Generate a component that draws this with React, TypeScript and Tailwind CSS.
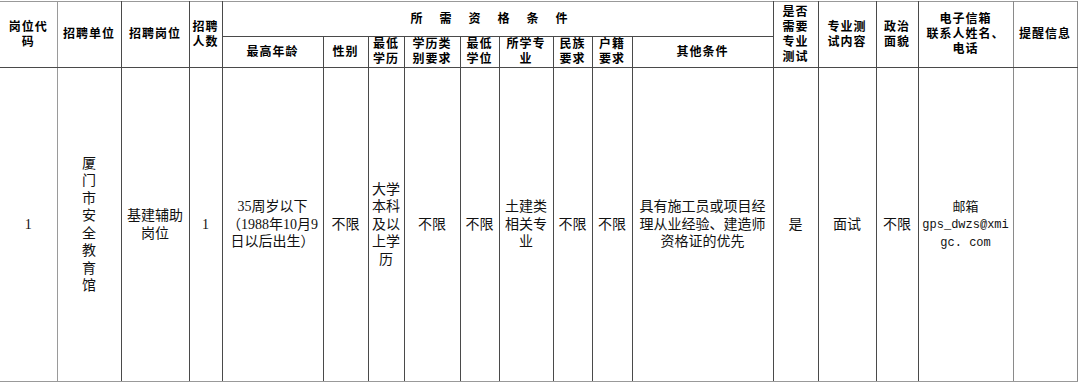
import React from 'react';

const cjk = "font-['Liberation_Serif','Noto_Sans_CJK_SC',serif]";
const th = "border border-[#4a4a4a] p-0 text-center align-middle font-bold text-[12px] leading-[15px] tracking-[1px] text-black";
const td = "border border-[#4a4a4a] p-0 text-center align-middle text-[14px] leading-[17.5px] text-[#111]";

const widths = [57, 64, 68, 33, 101, 45, 36, 56, 39, 54, 39, 40, 141, 45, 58, 42, 95, 64];

const Lines: React.FC<{ lines: string[] }> = ({ lines }) => (
  <>
    {lines.map((l, i) => (
      <div key={i}>{l}</div>
    ))}
  </>
);

export default function App() {
  return (
    <div className={`w-[1080px] h-[384px] bg-white pt-[1px] ${cjk}`}>
      <table className="table-fixed border-collapse w-[1077px]">
        <colgroup>
          {widths.map((w, i) => (
            <col key={i} style={{ width: w }} />
          ))}
        </colgroup>
        <thead>
          <tr className="h-[35px]">
            <th rowSpan={2} className={`${th} border-l-0 border-t-[#999] border-r-[#9a9a9a]`}>
              <Lines lines={['岗位代', '码']} />
            </th>
            <th rowSpan={2} className={`${th} border-t-[#999]`}>招聘单位</th>
            <th rowSpan={2} className={`${th} border-t-[#999]`}>招聘岗位</th>
            <th rowSpan={2} className={`${th} border-t-[#999]`}>
              <Lines lines={['招聘', '人数']} />
            </th>
            <th colSpan={9} className={`${th} border-t-[#999] tracking-[17px]`}>所需资格条件</th>
            <th rowSpan={2} className={`${th} border-t-[#999]`}>
              <Lines lines={['是否', '需要', '专业', '测试']} />
            </th>
            <th rowSpan={2} className={`${th} border-t-[#999]`}>
              <Lines lines={['专业测', '试内容']} />
            </th>
            <th rowSpan={2} className={`${th} border-t-[#999]`}>
              <Lines lines={['政治', '面貌']} />
            </th>
            <th rowSpan={2} className={`${th} border-t-[#999] border-r-[#8a8a8a]`}>
              <Lines lines={['电子信箱', '联系人姓名、', '电话']} />
            </th>
            <th rowSpan={2} className={`${th} border-t-[#999] border-r-[#8a8a8a]`}>提醒信息</th>
          </tr>
          <tr className="h-[31px]">
            <th className={th}>最高年龄</th>
            <th className={th}>性别</th>
            <th className={th}>
              <Lines lines={['最低', '学历']} />
            </th>
            <th className={th}>
              <Lines lines={['学历类', '别要求']} />
            </th>
            <th className={th}>
              <Lines lines={['最低', '学位']} />
            </th>
            <th className={th}>
              <Lines lines={['所学专', '业']} />
            </th>
            <th className={th}>
              <Lines lines={['民族', '要求']} />
            </th>
            <th className={th}>
              <Lines lines={['户籍', '要求']} />
            </th>
            <th className={th}>其他条件</th>
          </tr>
        </thead>
        <tbody>
          <tr className="h-[314px]">
            <td className={`${td} border-l-0 border-b-[#999] border-r-[#9a9a9a]`}>1</td>
            <td className={`${td} border-b-[#999]`}>
              <Lines lines={['厦', '门', '市', '安', '全', '教', '育', '馆']} />
            </td>
            <td className={`${td} border-b-[#999]`}>
              <Lines lines={['基建辅助', '岗位']} />
            </td>
            <td className={`${td} border-b-[#999]`}>1</td>
            <td className={`${td} border-b-[#999]`}>
              <Lines lines={['35周岁以下', '（1988年10月9', '日以后出生）']} />
            </td>
            <td className={`${td} border-b-[#999]`}>不限</td>
            <td className={`${td} border-b-[#999]`}>
              <Lines lines={['大学', '本科', '及以', '上学', '历']} />
            </td>
            <td className={`${td} border-b-[#999]`}>不限</td>
            <td className={`${td} border-b-[#999]`}>不限</td>
            <td className={`${td} border-b-[#999]`}>
              <Lines lines={['土建类', '相关专', '业']} />
            </td>
            <td className={`${td} border-b-[#999]`}>不限</td>
            <td className={`${td} border-b-[#999]`}>不限</td>
            <td className={`${td} border-b-[#999]`}>
              <Lines lines={['具有施工员或项目经', '理从业经验、建造师', '资格证的优先']} />
            </td>
            <td className={`${td} border-b-[#999]`}>是</td>
            <td className={`${td} border-b-[#999]`}>面试</td>
            <td className={`${td} border-b-[#999]`}>不限</td>
            <td className={`${td} border-b-[#999] border-r-[#8a8a8a] leading-[18px]`}>
              <div className="text-[13px]">邮箱</div>
              <div className="font-['Liberation_Mono',monospace] text-[12px]">gps_dwzs@xmi</div>
              <div className="font-['Liberation_Mono',monospace] text-[12px]">gc. com</div>
            </td>
            <td className={`${td} border-b-[#999] border-r-[#8a8a8a]`}></td>
          </tr>
        </tbody>
      </table>
    </div>
  );
}
